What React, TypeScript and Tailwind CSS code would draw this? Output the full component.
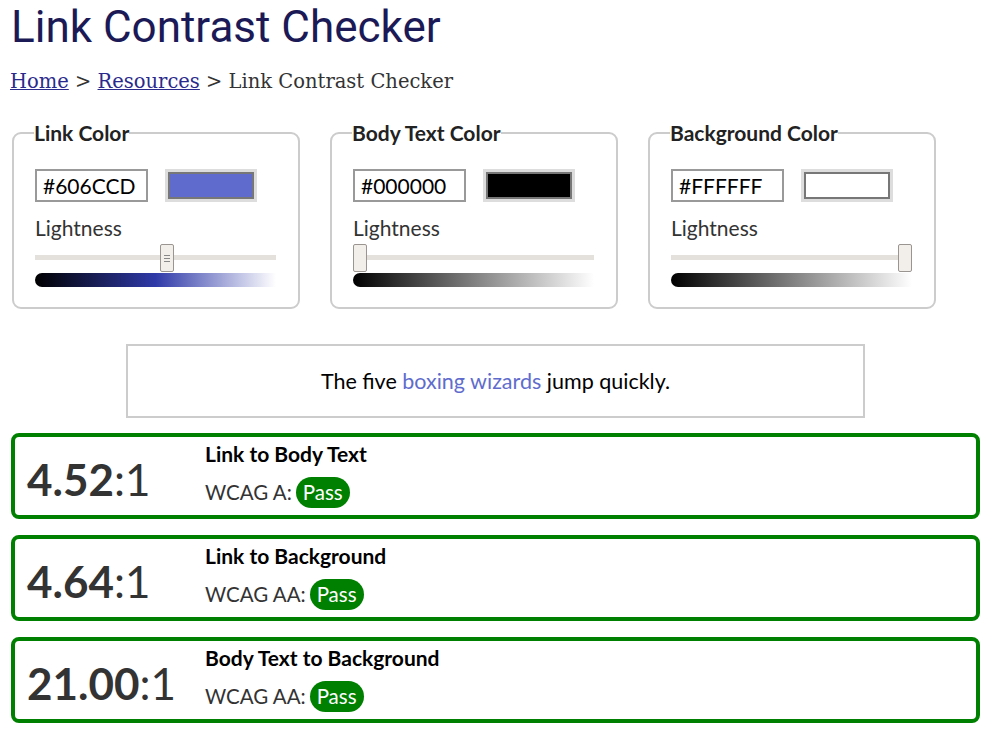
import React from "react";

type Picker = {
  label: string;
  hex: string;
  swatch: string;
  thumb: number;
  grip: boolean;
  gradient: string;
};

const pickers: Picker[] = [
  {
    label: "Link Color",
    hex: "#606CCD",
    swatch: "#606CCD",
    thumb: 55,
    grip: true,
    gradient: "linear-gradient(to right, #000000, #2f3aa8 50%, #ffffff)",
  },
  {
    label: "Body Text Color",
    hex: "#000000",
    swatch: "#000000",
    thumb: 0,
    grip: false,
    gradient: "linear-gradient(to right, #000000, #ffffff)",
  },
  {
    label: "Background Color",
    hex: "#FFFFFF",
    swatch: "#FFFFFF",
    thumb: 100,
    grip: false,
    gradient: "linear-gradient(to right, #000000, #ffffff)",
  },
];

const results = [
  { ratio: "4.52", title: "Link to Body Text", level: "WCAG A:" },
  { ratio: "4.64", title: "Link to Background", level: "WCAG AA:" },
  { ratio: "21.00", title: "Body Text to Background", level: "WCAG AA:" },
];

const ColorPicker: React.FC<{ p: Picker }> = ({ p }) => {
  return (
    <fieldset className="w-[288px] border-2 border-[#cccccc] rounded-[9px] px-[21px] pt-[25px] pb-[20px]">
      <legend className="text-[21px] font-bold leading-[22px] text-[#222] -ml-px">{p.label}</legend>
      <div className="flex items-center gap-[17px]">
        <div className="w-[113px] h-[33px] border-2 border-[#999] flex items-center px-[6px] text-[21px] text-black">
          {p.hex}
        </div>
        <div className="w-[92px] h-[33px] bg-[#dddddd] p-[3px]">
          {/* swatch */}
          <div className="w-full h-full border-2 border-[#777]" style={{ backgroundColor: p.swatch }} />
        </div>
      </div>
      <div className="mt-[14px] text-[21px] leading-[24px] text-[#333]">Lightness</div>
      <div className="relative mt-[4px] h-[28px] w-[241px]">
        <div className="absolute left-0 right-0 top-[11px] h-[5px] bg-[#e4e0db]" />
        <div
          className="absolute top-0 w-[14px] h-[28px] rounded-[2px] border border-[#9a9590] bg-[#f2efeb] flex flex-col items-center justify-center gap-[2px]"
          style={{ left: `calc(${p.thumb}% - ${(p.thumb / 100) * 14}px)` }}
        >
          {p.grip && (
            <>
              <div className="w-[6px] h-px bg-[#888]" />
              <div className="w-[6px] h-px bg-[#888]" />
              <div className="w-[6px] h-px bg-[#888]" />
            </>
          )}
        </div>
      </div>
      <div className="mt-[1px] h-[14px] w-[241px] rounded-l-[7px]" style={{ background: p.gradient }} />
    </fieldset>
  );
};

export default function App() {
  return (
    <div className="w-[1000px] h-[739px] bg-white overflow-hidden font-['Lato',sans-serif] text-[#333]">
      <h1 className="pl-[11px] pt-[2px] text-[44px] leading-[50px] text-[#1b1a57] font-['Roboto',sans-serif]">
        Link Contrast Checker
      </h1>
      {/* Breadcrumb */}
      <nav className="pl-[10px] mt-[18px] text-[19.5px] leading-[24px] text-[#333] font-['DejaVu_Serif',serif]">
        <a href="#" className="underline text-[#2a2a8c]">Home</a>
        <span> &gt; </span>
        <a href="#" className="underline text-[#2a2a8c]">Resources</a>
        <span> &gt; Link Contrast Checker</span>
      </nav>

      <div className="flex gap-[30px] pl-[12px] mt-[28px]">
        {pickers.map((p) => (
          <ColorPicker key={p.label} p={p} />
        ))}
      </div>

      <div className="ml-[126px] mt-[35px] w-[739px] h-[74px] border-2 border-[#cccccc] flex items-center justify-center text-[21.5px] text-black">
        <span>
          The five <a href="#" className="text-[#606CCD]">boxing wizards</a> jump quickly.
        </span>
      </div>

      <div className="flex flex-col gap-[16px] pl-[11px] mt-[15px] w-[980px]">
        {results.map((r) => (
          <div
            key={r.title}
            className="h-[86px] border-4 border-[#008000] rounded-[8px] flex items-center"
          >
            <div className="w-[190px] pl-[12px] pt-[6px] text-[44px] text-[#333]">
              <span className="font-bold">{r.ratio}</span>
              <span>:1</span>
            </div>
            <div className="flex flex-col -mt-[1px]">
              <div className="-mt-[2px] text-[21px] leading-[24px] font-bold text-black">{r.title}</div>
              <div className="mt-[11px] flex items-center gap-[4px] text-[20.5px] text-[#333]">
                <span>{r.level}</span>
                <span className="bg-[#008000] text-white rounded-full px-[7px] leading-[31px]">Pass</span>
              </div>
            </div>
          </div>
        ))}
      </div>
    </div>
  );
}
